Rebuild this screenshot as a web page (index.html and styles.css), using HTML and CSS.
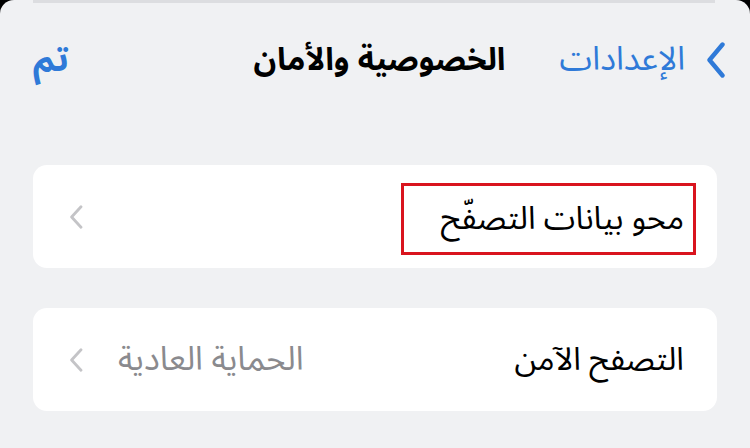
FILE: index.html
```html
<!DOCTYPE html>
<html lang="ar" dir="rtl">
<head>
<meta charset="utf-8">
<link rel="stylesheet" href="styles.css">
</head>
<body>
<div class="sheet">
  <div class="backband"></div>
  <header class="nav">
    <a class="back">
      <svg class="back-chev" width="20" height="36" viewBox="0 0 20 36"><path d="M16.5 2.5 L3.5 18 L16.5 33.5" fill="none" stroke="#2f7ad8" stroke-width="4.4" stroke-linecap="round" stroke-linejoin="round"/></svg>
      <span>الإعدادات</span>
    </a>
    <h1 class="title">الخصوصية والأمان</h1>
    <a class="done">تم</a>
  </header>
  <main class="list">
    <section class="card">
      <span class="label highlight">محو بيانات التصفّح</span>
      <svg class="chev" width="14" height="24" viewBox="0 0 14 24"><path d="M12 1.8 L2.6 12 L12 22.2" fill="none" stroke="#c4c4c7" stroke-width="2.8" stroke-linecap="round" stroke-linejoin="round"/></svg>
    </section>
    <section class="card">
      <span class="label">التصفح الآمن</span>
      <span class="value">الحماية العادية</span>
      <svg class="chev" width="14" height="24" viewBox="0 0 14 24"><path d="M12 1.8 L2.6 12 L12 22.2" fill="none" stroke="#c4c4c7" stroke-width="2.8" stroke-linecap="round" stroke-linejoin="round"/></svg>
    </section>
  </main>
</div>
</body>
</html>
```
FILE: styles.css
```css
html, body {
  margin: 0;
  padding: 0;
  background: #000;
}
body {
  width: 750px;
  height: 448px;
  overflow: hidden;
  font-family: "Noto Sans Arabic", "DejaVu Sans", sans-serif;
}
.sheet {
  position: relative;
  height: 448px;
  background: #f0f1f3;
  border-radius: 14px 14px 0 0;
  overflow: hidden;
}
.backband {
  position: absolute;
  top: 0;
  left: 33px;
  right: 35px;
  height: 3px;
  background: #dcdde0;
}
.nav {
  display: grid;
  grid-template-columns: 1fr auto 1fr;
  align-items: center;
  height: 120px;
  padding: 0 24px 0 33px;
  line-height: 44px;
}
.back {
  display: flex;
  align-items: center;
  gap: 21px;
  color: #2f7ad8;
  font-size: 33px;
  justify-self: start;
}
.back-chev { display: block; }
.title {
  margin: 0;
  font-size: 31.5px;
  font-weight: bold;
  color: #000;
}
.done {
  justify-self: end;
  color: #2f7ad8;
  font-size: 35px;
  font-weight: bold;
}
.list {
  display: flex;
  flex-direction: column;
  gap: 40px;
  padding: 45px 33px 0;
}
.card {
  display: flex;
  align-items: center;
  height: 103px;
  background: #fff;
  border-radius: 14px;
  padding: 0 33px 0 36px;
}
.label {
  font-size: 32px;
  line-height: 44px;
  color: #000;
}
.highlight {
  border: 3px solid #d9141e;
  margin-right: -12px;
  padding: 11px 9px 11px 37px;
  margin-top: 4px;
}
.value {
  margin-right: auto;
  margin-left: 35px;
  font-size: 33px;
  line-height: 44px;
  color: #8a8a8e;
}
.chev {
  display: block;
  margin-right: auto;
}
.value + .chev { margin-right: 0; }
```
